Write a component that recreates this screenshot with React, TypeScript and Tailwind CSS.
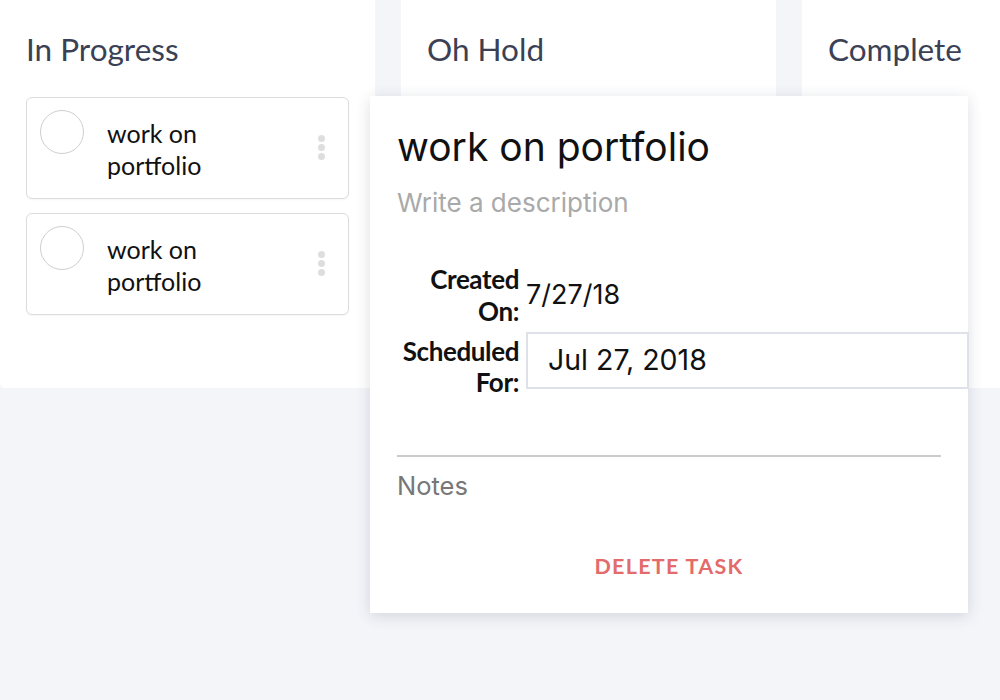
import React from 'react';

const TaskCard: React.FC<{ title: string }> = ({ title }) => {
  return (
    <div className="flex h-[102px] w-[323px] items-start rounded-[6px] border border-[#dcdcdc] bg-white pl-[13px] pr-[23px] pt-[12px] shadow-[0_1px_2px_rgba(0,0,0,0.04)]">
      <div className="h-[44px] w-[44px] shrink-0 rounded-full border-[1.5px] border-[#cfcfcf]" />
      <p className="ml-[23px] mt-[7px] w-[130px] shrink-0 text-[25px] leading-[32px] text-[#111]">{title}</p>
      {/* kebab menu */}
      <div className="ml-auto mt-[25px] flex flex-col gap-[2px]">
        <span className="h-[7px] w-[7px] rounded-full bg-[#dedede]" />
        <span className="h-[7px] w-[7px] rounded-full bg-[#dedede]" />
        <span className="h-[7px] w-[7px] rounded-full bg-[#dedede]" />
      </div>
    </div>
  );
};

const Column: React.FC<{ title: string; children?: React.ReactNode }> = ({ title, children }) => {
  return (
    <div className="h-[388px] w-[375px] shrink-0 rounded-b-[5px] bg-white px-[26px] pt-[32px]">
      <h2 className="text-[31.5px] leading-[34px] text-[#3a4155]">{title}</h2>
      <div className="mt-[31px] flex flex-col gap-[14px]">{children}</div>
    </div>
  );
};

const App: React.FC = () => {
  return (
    <div className="relative h-[700px] w-[1000px] overflow-hidden bg-[#f4f5f9] font-['Lato',sans-serif]">
      <div className="flex gap-[26px]">
        <Column title="In Progress">
          <TaskCard title="work on portfolio" />
          <TaskCard title="work on portfolio" />
        </Column>
        <Column title="Oh Hold" />
        <Column title="Complete" />
      </div>

      {/* Task detail popover */}
      <div className="absolute left-[370px] top-[96px] flex h-[517px] w-[598px] flex-col bg-white px-[27px] pt-[28px] shadow-[0_3px_14px_rgba(40,50,80,0.16)] font-['Inter',sans-serif]">
        <h1 className="text-[39px] leading-[46px] text-[#111]">work on portfolio</h1>
        <p className="mt-[17px] text-[26px] leading-[32px] text-[#a9a9a9]">Write a description</p>

        <div className="mt-[44px] grid grid-cols-[122px_1fr] gap-x-[7px] gap-y-[5px]">
          <div className="text-right font-['Lato',sans-serif] text-[26px] font-bold leading-[32px] tracking-[-0.4px] text-[#111]">
            Created
            <br />
            On:
          </div>
          <div className="self-center text-[27px] leading-[32px] text-[#111]">7/27/18</div>

          <div className="mt-[4px] text-right font-['Lato',sans-serif] text-[26px] font-bold leading-[31px] tracking-[-0.4px] text-[#111]">
            Scheduled
            <br />
            For:
          </div>
          <div className="flex h-[57px] w-[443px] items-center border-2 border-[#dfe1e8] pl-[20px] text-[28.5px] text-[#111]">
            Jul 27, 2018
          </div>
        </div>

        <div className="mt-[57px] h-[2px] bg-[#cbcbcb]" />
        <p className="mt-[14px] text-[25.5px] leading-[30px] text-[#777]">Notes</p>

        <button className="mt-[52px] self-center font-['Lato',sans-serif] text-[21.5px] font-bold leading-[26px] tracking-[1.3px] text-[#e36b6b]">
          DELETE TASK
        </button>
      </div>
    </div>
  );
};

export default App;
